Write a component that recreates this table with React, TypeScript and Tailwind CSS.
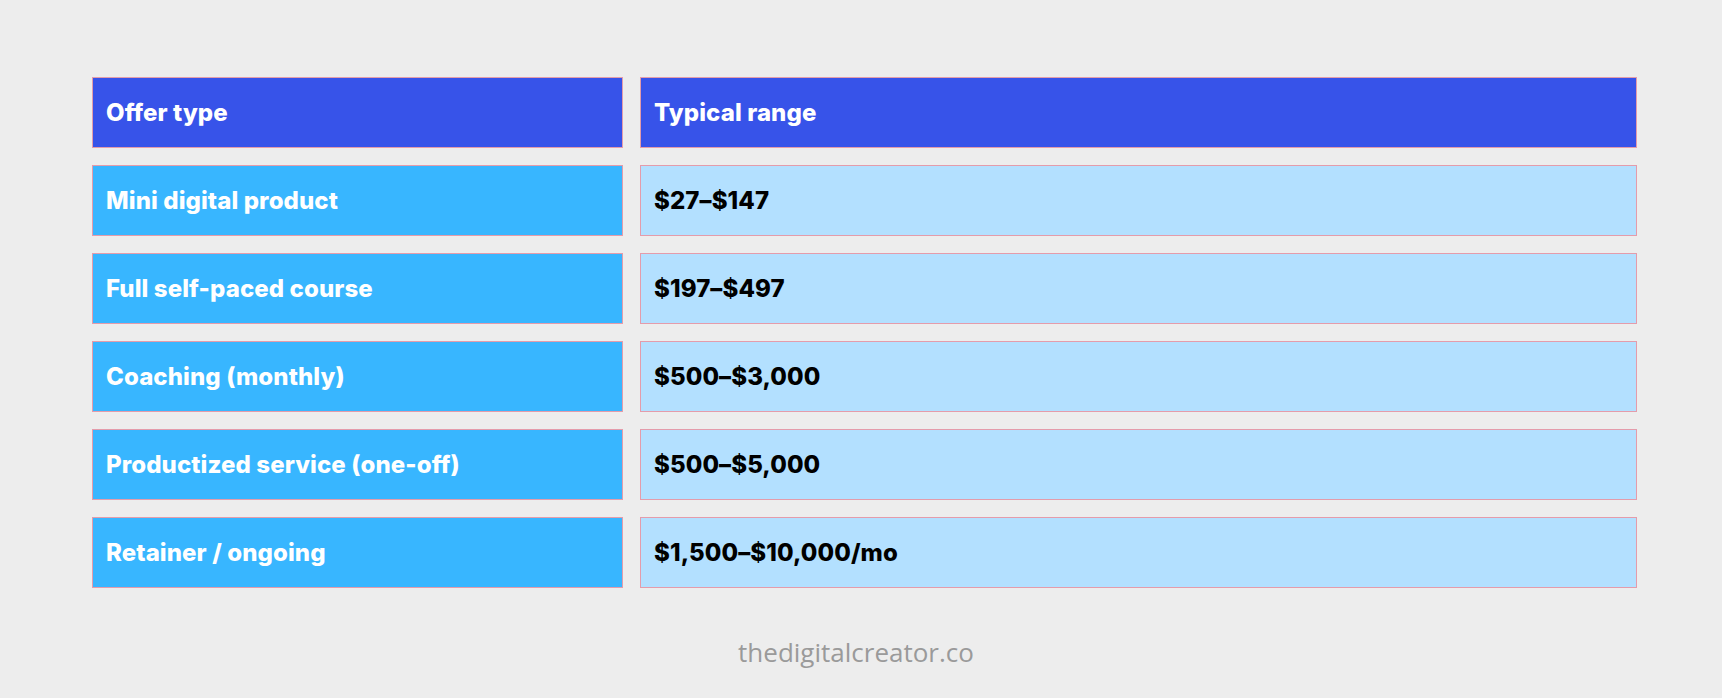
import { Fragment } from 'react'

const rows = [
  { offer: 'Mini digital product', range: '$27–$147' },
  { offer: 'Full self-paced course', range: '$197–$497' },
  { offer: 'Coaching (monthly)', range: '$500–$3,000' },
  { offer: 'Productized service (one-off)', range: '$500–$5,000' },
  { offer: 'Retainer / ongoing', range: '$1,500–$10,000/mo' },
]

export default function App() {
  return (
    <div className="h-[698px] w-[1722px] bg-[#ededed] pl-[92px] pt-[77px] font-['Inter',sans-serif]">
      <div className="grid w-[1545px] grid-cols-[531px_997px] gap-[17px] text-[24px] font-extrabold tracking-[0.1px]">
        <div className="flex h-[71px] items-center border border-[#e49cab] bg-[#3753e9] px-[13px] text-white">
          Offer type
        </div>
        <div className="flex h-[71px] items-center border border-[#e49cab] bg-[#3753e9] px-[13px] text-white">
          Typical range
        </div>
        {rows.map((r) => (
          <Fragment key={r.offer}>
            <div className="flex h-[71px] items-center border border-[#e49cab] bg-[#38b6ff] px-[13px] text-white">
              {r.offer}
            </div>
            <div className="flex h-[71px] items-center border border-[#e49cab] bg-[#b3e0ff] px-[13px] text-black">
              {r.range}
            </div>
          </Fragment>
        ))}
      </div>
      <p className="mt-[51px] w-[1528px] text-center font-['Open_Sans',sans-serif] text-[26px] leading-none text-[#9a9a9a]">
        thedigitalcreator.co
      </p>
    </div>
  )
}
